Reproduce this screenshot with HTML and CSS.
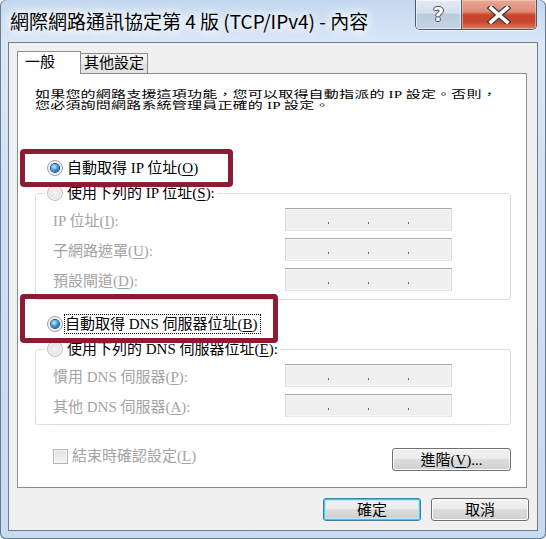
FILE: index.html
```html
<!DOCTYPE html>
<html lang="zh-Hant">
<head>
<meta charset="utf-8">
<title>TCP/IPv4 內容</title>
<link rel="stylesheet" href="styles.css">
</head>
<body>
<div class="window">
  <div class="titlebar">
    <div class="title">網際網路通訊協定第 4 版 (TCP/IPv4) - 內容</div>
    <div class="caption-btns">
      <div class="cbtn help">?</div>
      <div class="cbtn close">
        <svg width="24" height="18" viewBox="0 0 24 18">
          <path d="M4 2 L20 16 M20 2 L4 16" stroke="#3b3b3b" stroke-width="6" stroke-linecap="square"/>
          <path d="M4 2 L20 16 M20 2 L4 16" stroke="#ffffff" stroke-width="3.6" stroke-linecap="square"/>
        </svg>
      </div>
    </div>
  </div>
  <div class="client">
    <div class="tabs">
      <div class="tab active">一般</div>
      <div class="tab">其他設定</div>
    </div>
    <div class="panel">
      <p class="desc">如果您的網路支援這項功能，您可以取得自動指派的 IP 設定。否則，<br>您必須詢問網路系統管理員正確的 IP 設定。</p>
      <div class="opt opt-ip"><span class="radio on"></span><span class="lbl">自動取得 IP 位址(<u>O</u>)</span></div>
      <fieldset class="group g1">
        <legend class="opt"><span class="radio"></span><span class="lbl">使用下列的 IP 位址(<u>S</u>):</span></legend>
        <div class="field"><span class="flabel">IP 位址(<u>I</u>):</span><div class="ipbox"><i></i><i></i><i></i></div></div>
        <div class="field"><span class="flabel">子網路遮罩(<u>U</u>):</span><div class="ipbox"><i></i><i></i><i></i></div></div>
        <div class="field"><span class="flabel">預設閘道(<u>D</u>):</span><div class="ipbox"><i></i><i></i><i></i></div></div>
      </fieldset>
      <div class="opt opt-dns"><span class="radio on"></span><span class="lbl focus">自動取得 DNS 伺服器位址(<u>B</u>)</span></div>
      <fieldset class="group g2">
        <legend class="opt"><span class="radio"></span><span class="lbl">使用下列的 DNS 伺服器位址(<u>E</u>):</span></legend>
        <div class="field"><span class="flabel">慣用 DNS 伺服器(<u>P</u>):</span><div class="ipbox"><i></i><i></i><i></i></div></div>
        <div class="field"><span class="flabel">其他 DNS 伺服器(<u>A</u>):</span><div class="ipbox"><i></i><i></i><i></i></div></div>
      </fieldset>
      <div class="bottomrow">
        <div class="check"><span class="box"></span><span class="flabel">結束時確認設定(<u>L</u>)</span></div>
        <button class="btn adv">進階(<u>V</u>)...</button>
      </div>
      <div class="mark m1"></div>
      <div class="mark m2"></div>
    </div>
    <div class="actions">
      <button class="btn default">確定</button>
      <button class="btn">取消</button>
    </div>
  </div>
</div>
</body>
</html>
```
FILE: styles.css
```css
html, body {
  margin: 0;
  padding: 0;
  background: #ffffff;
}
body {
  font-family: "Liberation Serif", "Noto Sans CJK TC", serif;
  font-size: 15px;
  color: #000;
}
.window {
  width: 546px;
  height: 539px;
  box-sizing: border-box;
  display: flex;
  flex-direction: column;
  background: linear-gradient(180deg, #c3d8f0 0px, #dbe8f7 45px, #cfe0f4 200px, #c6dbf2 539px);
  border-radius: 6px;
  box-shadow: inset 1px 0 0 #6b7b8f, inset -1px 0 0 #6b7b8f, inset 0 -1px 0 #6b7b8f;
  overflow: hidden;
}
.titlebar {
  height: 42px;
  flex: none;
  display: flex;
  justify-content: space-between;
  align-items: flex-start;
}
.title {
  padding: 6px 0 0 10px;
  font-family: "Noto Sans CJK TC", "Noto Sans", sans-serif;
  font-size: 19px;
  line-height: 30px;
  color: #000;
  text-shadow: 0 0 8px #ffffff, 0 0 12px #ffffff, 0 0 14px #ffffff;
  white-space: nowrap;
}
.caption-btns {
  display: flex;
  margin-right: 9px;
  height: 29px;
  border: 1px solid #4b5a6d;
  border-top: none;
  border-radius: 0 0 5px 5px;
  overflow: hidden;
  box-shadow: 0 1px 0 rgba(255,255,255,0.6);
}
.cbtn {
  height: 29px;
  display: flex;
  align-items: center;
  justify-content: center;
}
.help {
  width: 45px;
  border-right: 1px solid #4b5a6d;
  background: linear-gradient(180deg, #e4ecf5 0%, #d3dfec 45%, #bccbdc 50%, #c6d5e6 100%);
  box-shadow: inset 0 0 0 1px rgba(255,255,255,0.55);
  color: #fff;
  font-family: "DejaVu Sans", sans-serif;
  font-weight: bold;
  font-size: 19px;
  line-height: 29px;
  text-shadow: -1px 0 #3f4a57, 1px 0 #3f4a57, 0 -1px #3f4a57, 0 1px #3f4a57;
}
.close {
  width: 74px;
  background: linear-gradient(180deg, #e9a898 0%, #df8b75 40%, #c9452b 52%, #c8472c 75%, #dc7a5e 100%);
  box-shadow: inset 0 0 0 1px rgba(255,230,220,0.45);
}
.client {
  margin: 0 8px 8px 8px;
  height: 489px;
  box-sizing: border-box;
  border: 1px solid #6f7e90;
  background: #f0f0f0;
  padding: 8px 8px 0 8px;
  display: flex;
  flex-direction: column;
}
.tabs {
  display: flex;
  align-items: flex-end;
  height: 22px;
}
.tab {
  box-sizing: border-box;
  height: 20px;
  width: 68px;
  margin-left: -1px;
  border: 1px solid #898c95;
  border-bottom: none;
  padding-left: 3px;
  line-height: 19px;
  background: linear-gradient(180deg, #f3f3f3 0%, #ebebeb 50%, #dedede 51%, #e4e4e4 100%);
  white-space: nowrap;
}
.tab.active {
  position: relative;
  z-index: 1;
  margin-left: 0;
  width: 64px;
  height: 23px;
  margin-bottom: -1px;
  padding-left: 7px;
  line-height: 21px;
  background: #ffffff;
}
.panel {
  position: relative;
  box-sizing: border-box;
  width: 510px;
  height: 415px;
  border: 1px solid #898c95;
  background: #ffffff;
  padding: 0;
}
.desc {
  margin: 15px 0 0 17px;
  height: 34px;
  line-height: 17px;
  letter-spacing: 0.2px;
  white-space: nowrap;
  transform: scaleY(0.68);
  transform-origin: 0 0;
}
.opt {
  display: flex;
  align-items: center;
  height: 20px;
  line-height: 20px;
  white-space: nowrap;
}
.opt-ip {
  margin: 35px 0 0 29px;
}
.opt-dns {
  margin: 14px 0 0 29px;
}
.lbl {
  margin-left: 4px;
}
.focus {
  outline: 1px dotted #000;
  outline-offset: 0;
  margin-left: 2px;
  padding: 0 2px 0 0;
  line-height: 18px;
}
.radio {
  position: relative;
  flex: none;
  box-sizing: border-box;
  width: 16px;
  height: 16px;
  border-radius: 50%;
  border: 1px solid #9aa0a8;
  background: radial-gradient(circle at 50% 50%, #f4f4f4 0%, #e6e6e6 55%, #d8d8d8 100%);
  box-shadow: inset 0 0 0 1px #fafafa;
}
.radio.on::after {
  content: "";
  position: absolute;
  left: 3px;
  top: 3px;
  width: 8px;
  height: 8px;
  border-radius: 50%;
  background: radial-gradient(circle at 40% 35%, #d6f0ff 0%, #5ab0f0 35%, #1c64a8 75%, #0e3f76 100%);
  box-shadow: 0 0 0 1px #23507e;
}
.group {
  margin: 5px 15px 0 17px;
  padding: 0 0 8px 0;
  border: 1px solid #d5dfe5;
  border-radius: 3px;
  min-width: 0;
}
.group legend {
  margin-left: 9px;
  padding: 0 2px;
}
.group legend .radio {
  border-color: #b9bec4;
}
.g1 .field + .field,
.g2 .field + .field {
  margin-top: 7px;
}
.g1 {
  padding-top: 5px;
}
.g2 {
  padding-top: 5px;
  padding-bottom: 7px;
}
.field {
  display: flex;
  align-items: center;
  height: 23px;
  padding-left: 17px;
}
.flabel {
  color: #a3a3a3;
  white-space: nowrap;
}
.field .flabel {
  width: 232px;
  flex: none;
}
.ipbox {
  box-sizing: border-box;
  width: 167px;
  height: 23px;
  border: 1px solid;
  border-color: #a7a9ad #d5d8dc #e3e6ea #d5d8dc;
  background: #efefef;
  box-shadow: inset 0 0 0 1px #f6f6f6;
  display: flex;
  align-items: flex-end;
  gap: 39px;
  padding: 0 0 6px 42px;
}
.ipbox i {
  display: block;
  width: 1px;
  height: 2px;
  background: #6a6a6a;
}
.bottomrow {
  display: flex;
  align-items: flex-start;
  justify-content: space-between;
  margin: 23px 15px 0 35px;
  height: 23px;
}
.check {
  display: flex;
  align-items: center;
  height: 16px;
  line-height: 16px;
}
.check .box {
  box-sizing: border-box;
  width: 15px;
  height: 15px;
  margin-right: 4px;
  border: 1px solid #b5b5b5;
  background: linear-gradient(180deg, #e2e2e2, #f5f5f5);
  box-shadow: inset 0 0 0 1px #f7f7f7;
}
.btn {
  box-sizing: border-box;
  height: 23px;
  padding: 0;
  border: 1px solid #707070;
  border-radius: 3px;
  background: linear-gradient(180deg, #f2f2f2 0%, #ebebeb 49%, #dddddd 50%, #cfcfcf 100%);
  box-shadow: inset 0 0 0 1px #fbfbfb;
  font-family: "Liberation Serif", "Noto Sans CJK TC", serif;
  font-size: 15px;
  line-height: 20px;
  color: #000;
  text-align: center;
}
.adv {
  width: 119px;
}
.actions {
  display: flex;
  justify-content: flex-end;
  gap: 10px;
  margin-top: 10px;
}
.actions .btn {
  width: 98px;
}
.btn.default {
  border-color: #3c7fb1;
  box-shadow: inset 0 0 0 1px #48c4f0, inset 0 0 0 2px #c0e8fa;
}
.mark {
  position: absolute;
  left: 2px;
  box-sizing: border-box;
  border: 5px solid #8b1c32;
  border-radius: 4px;
}
.m1 {
  top: 75px;
  width: 213px;
  height: 38px;
}
.m2 {
  top: 220px;
  width: 258px;
  height: 49px;
}
u {
  text-decoration-thickness: 1px;
  text-underline-offset: 2px;
}
```
